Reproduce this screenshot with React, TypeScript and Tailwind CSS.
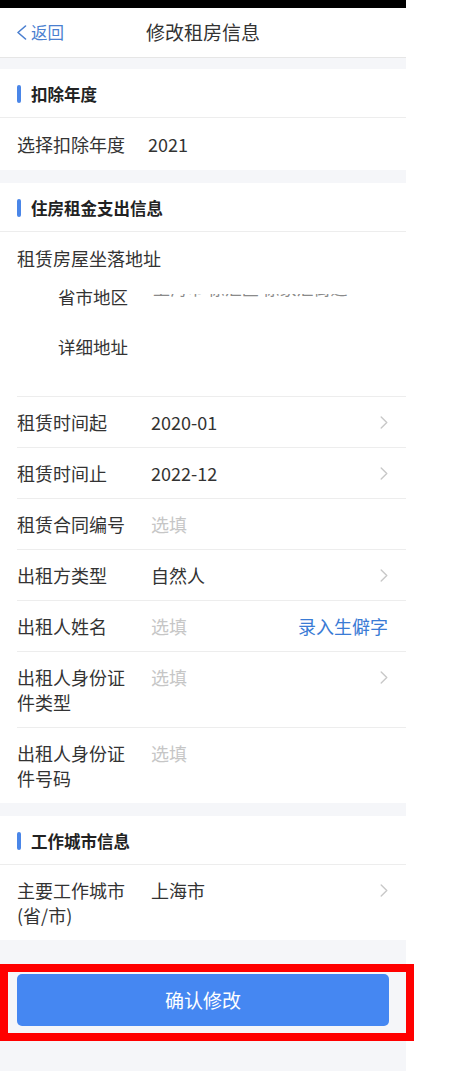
import React from "react";

const font = { fontFamily: '"Noto Sans CJK SC", "Noto Sans", sans-serif' };

function Chevron() {
  return (
    <svg width="8" height="13" viewBox="0 0 8 13" className="shrink-0">
      <path d="M1.2 1 L6.8 6.5 L1.2 12" fill="none" stroke="#c8c8c8" strokeWidth="1.4" strokeLinecap="round" strokeLinejoin="round" />
    </svg>
  );
}

function SectionTitle({ title }: { title: string }) {
  return (
    <div className="flex h-[49px] items-center gap-[10px] border-b border-[#ededed] bg-white px-[17px] pt-[2px]">
      <span className="h-[18px] w-[4px] rounded-full bg-[#4a86e8]" />
      <span className="text-[16.5px] font-bold text-[#222]">{title}</span>
    </div>
  );
}

type RowProps = {
  label: string;
  value?: string;
  placeholder?: boolean;
  arrow?: boolean;
  link?: string;
  last?: boolean;
};

function Row({ label, value = "选填", placeholder, arrow, link, last }: RowProps) {
  return (
    <div className="pl-[17px]">
      <div className={`flex items-start py-[12.5px] pr-[18px] text-[18px] leading-[25px] ${last ? "" : "border-b border-[#ededed]"}`}>
        <div className="w-[134px] shrink-0 pr-[16px] text-[#333]">{label}</div>
        <div className={`flex-1 ${placeholder ? "text-[#c6c6c6]" : "text-[#333]"}`}>{value}</div>
        {link && <span className="text-[#3a7bd5]">{link}</span>}
        {arrow && (
          <div className="flex h-[25px] items-center">
            <Chevron />
          </div>
        )}
      </div>
    </div>
  );
}

export default function App() {
  return (
    <div className="min-h-[1071px] w-[406px] bg-[#f5f6f9]" style={font}>
      <div className="h-[8px] bg-black" />

      {/* Header */}
      <div className="relative flex h-[50px] items-center justify-center border-b border-[#e6e6e6] bg-white">
        <div className="absolute left-[16px] top-0 flex h-full items-center gap-[4px] text-[16.5px] text-[#4a7fd0]">
          <svg width="11" height="15" viewBox="0 0 11 15">
            <path d="M9.5 1 L2 7.5 L9.5 14" fill="none" stroke="#4a7fd0" strokeWidth="1.6" strokeLinecap="round" strokeLinejoin="round" />
          </svg>
          <span>返回</span>
        </div>
        <span className="text-[19px] text-[#333]">修改租房信息</span>
      </div>

      <div className="h-[11px]" />

      {/* 扣除年度 */}
      <div className="bg-white">
        <SectionTitle title="扣除年度" />
        <div className="flex h-[52px] items-center px-[17px] text-[18px] text-[#333]">
          <span>选择扣除年度</span>
          <span className="ml-[23px]">2021</span>
        </div>
      </div>

      <div className="h-[13px]" />

      {/* 住房租金支出信息 */}
      <div className="bg-white">
        <SectionTitle title="住房租金支出信息" />
        <div className="pl-[17px]">
          <div className="border-b border-[#ededed] pt-[14px] pr-[18px] text-[18px] leading-[25px] text-[#333]">
            <div>租赁房屋坐落地址</div>
            <div className="flex h-[50px] items-center pl-[41px]">
              <span className="w-[95px] shrink-0 text-[17.5px]">省市地区</span>
              <div className="flex-1 self-start pt-[23px]">
                <div className="h-[3px] overflow-hidden">
                  <div className="-mt-[17px] flex items-center justify-between text-[17px] leading-[22px] text-[#8a8a8a]">
                    <span>上海市 徐汇区 徐家汇街道</span>
                    <span className="text-[#d0d0d0]">›</span>
                  </div>
                </div>
              </div>
            </div>
            <div className="h-[75px] pl-[41px] pt-[13px]">
              <span className="text-[17.5px]">详细地址</span>
            </div>
          </div>
        </div>
        <Row label="租赁时间起" value="2020-01" arrow />
        <Row label="租赁时间止" value="2022-12" arrow />
        <Row label="租赁合同编号" placeholder />
        <Row label="出租方类型" value="自然人" arrow />
        <Row label="出租人姓名" placeholder link="录入生僻字" />
        <Row label="出租人身份证件类型" placeholder arrow />
        <Row label="出租人身份证件号码" placeholder last />
      </div>

      <div className="h-[13px]" />

      {/* 工作城市信息 */}
      <div className="bg-white">
        <SectionTitle title="工作城市信息" />
        <Row label="主要工作城市(省/市)" value="上海市" arrow last />
      </div>

      {/* Bottom button */}
      <div className="relative pt-[34px] pb-[44px]">
        <div className="mx-[17px] flex h-[52px] items-center justify-center rounded-[5px] bg-[#4587f2] text-[19px] text-white">
          确认修改
        </div>
        <div className="pointer-events-none absolute left-0 top-[24px] h-[77px] w-[414px] border-[8px] border-[#ff0000]" />
      </div>
    </div>
  );
}
